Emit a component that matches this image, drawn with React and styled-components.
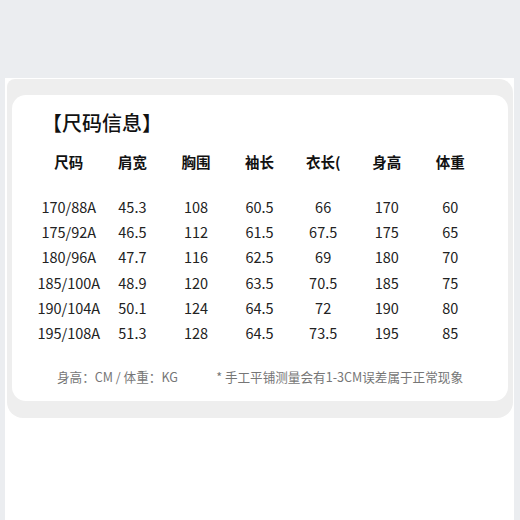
import React from 'react';
import styled, { createGlobalStyle } from 'styled-components';

const GlobalStyle = createGlobalStyle`
  html, body {
    margin: 0;
    padding: 0;
    background: #ebedf0;
  }
  body {
    font-family: "Noto Sans CJK SC", "Noto Sans", sans-serif;
  }
`;

const Page = styled.div`
  width: 520px;
  height: 520px;
  display: flex;
  flex-direction: column;
  overflow: hidden;
`;

const TopBand = styled.div`
  height: 78px;
  flex-shrink: 0;
`;

const Sheet = styled.div`
  flex: 1;
  margin: 0 6px 0 5px;
  background: #fff;
  padding: 1px 1px 0 2px;
`;

const GrayCard = styled.div`
  background: #eeeeee;
  border-radius: 8px 14px 16px 16px;
  padding: 16px 5px 17px 5px;
`;

const WhiteCard = styled.div`
  background: #fff;
  border-radius: 14px;
  padding: 14px 25px 12px 25px;
`;

const Title = styled.div`
  font-size: 20px;
  line-height: 28px;
  font-weight: 500;
  color: #111;
  margin-left: 5px;
`;

const Table = styled.div`
  display: grid;
  grid-template-columns: repeat(7, 63.6px);
  margin-top: 13px;
`;

const HeadCell = styled.div`
  text-align: center;
  font-size: 14.5px;
  font-weight: 700;
  color: #111;
  line-height: 24px;
  height: 24px;
  margin-bottom: 20px;
`;

const Cell = styled.div`
  text-align: center;
  font-size: 14.5px;
  color: #222;
  line-height: 25.2px;
  height: 25.2px;
`;

const Footer = styled.div`
  display: flex;
  justify-content: space-between;
  padding: 0 20px 0 20px;
  margin-top: 20px;
  font-size: 12.6px;
  line-height: 24px;
  color: #767676;
`;

const headers = ['尺码', '肩宽', '胸围', '袖长', '衣长(', '身高', '体重'];

const rows = [
  ['170/88A', '45.3', '108', '60.5', '66', '170', '60'],
  ['175/92A', '46.5', '112', '61.5', '67.5', '175', '65'],
  ['180/96A', '47.7', '116', '62.5', '69', '180', '70'],
  ['185/100A', '48.9', '120', '63.5', '70.5', '185', '75'],
  ['190/104A', '50.1', '124', '64.5', '72', '190', '80'],
  ['195/108A', '51.3', '128', '64.5', '73.5', '195', '85'],
];

export default function App() {
  return (
    <Page>
      <GlobalStyle />
      <TopBand />
      <Sheet>
        <GrayCard>
          <WhiteCard>
            <Title>【尺码信息】</Title>
            <Table>
              {headers.map(h => (
                <HeadCell key={h}>{h}</HeadCell>
              ))}
              {rows.map(row =>
                row.map((v, i) => <Cell key={row[0] + i}>{v}</Cell>)
              )}
            </Table>
            <Footer>
              <span>身高：CM / 体重：KG</span>
              <span>* 手工平铺测量会有1-3CM误差属于正常现象</span>
            </Footer>
          </WhiteCard>
        </GrayCard>
      </Sheet>
    </Page>
  );
}
